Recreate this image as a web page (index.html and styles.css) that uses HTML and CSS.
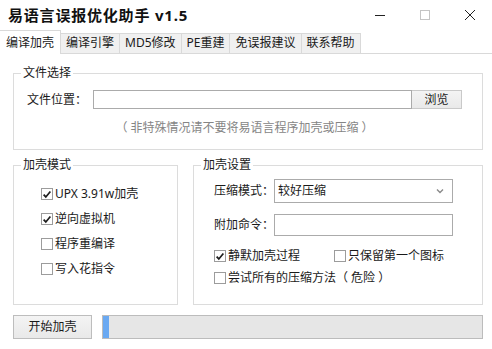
FILE: index.html
```html
<!DOCTYPE html>
<html lang="zh-CN">
<head>
  <meta charset="UTF-8">
  <title>易语言误报优化助手 v1.5</title>
  <link rel="stylesheet" href="styles.css">
</head>
<body>
  <div class="titlebar">
    <div class="app-title">易语言误报优化助手 v1.5</div>
    <div class="win-btns">
      <span class="win-btn"><svg width="10" height="10" viewBox="0 0 10 10"><path d="M0 5.5H10" stroke="#222" stroke-width="1"/></svg></span>
      <span class="win-btn"><svg width="10" height="10" viewBox="0 0 10 10"><rect x="0.5" y="0.5" width="9" height="9" fill="none" stroke="#c4c4c4"/></svg></span>
      <span class="win-btn"><svg width="10" height="10" viewBox="0 0 10 10"><path d="M0 0L10 10M10 0L0 10" stroke="#222" stroke-width="1"/></svg></span>
    </div>
  </div>

  <div class="tabs">
    <div class="tab active">编译加壳</div>
    <div class="tab">编译引擎</div>
    <div class="tab">MD5修改</div>
    <div class="tab">PE重建</div>
    <div class="tab">免误报建议</div>
    <div class="tab">联系帮助</div>
  </div>

  <div class="page">
    <fieldset class="group file-group">
      <legend>文件选择</legend>
      <div class="file-row">
        <span class="label">文件位置：</span>
        <div class="textbox file-path"></div>
        <button class="btn browse">浏览</button>
      </div>
      <div class="hint">（ 非特殊情况请不要将易语言程序加壳或压缩 ）</div>
    </fieldset>

    <div class="columns">
      <fieldset class="group mode-group">
        <legend>加壳模式</legend>
        <label class="check"><span class="cb on"><svg width="11" height="11" viewBox="0 0 11 11"><path d="M1.8 5.6L4.2 8.2L9.2 2.2" fill="none" stroke="#1e1e1e" stroke-width="1.9"/></svg></span>UPX 3.91w加壳</label>
        <label class="check"><span class="cb on"><svg width="11" height="11" viewBox="0 0 11 11"><path d="M1.8 5.6L4.2 8.2L9.2 2.2" fill="none" stroke="#1e1e1e" stroke-width="1.9"/></svg></span>逆向虚拟机</label>
        <label class="check"><span class="cb"></span>程序重编译</label>
        <label class="check"><span class="cb"></span>写入花指令</label>
      </fieldset>

      <fieldset class="group pack-group">
        <legend>加壳设置</legend>
        <div class="form-row">
          <span class="label">压缩模式：</span>
          <div class="combo">
            <span>较好压缩</span>
            <svg width="8" height="6" viewBox="0 0 8 6"><path d="M1 1.5L4 4.5L7 1.5" fill="none" stroke="#8a8a8a" stroke-width="1.4"/></svg>
          </div>
        </div>
        <div class="form-row second">
          <span class="label">附加命令：</span>
          <div class="textbox cmd"></div>
        </div>
        <div class="check-row">
          <label class="check"><span class="cb on"><svg width="11" height="11" viewBox="0 0 11 11"><path d="M1.8 5.6L4.2 8.2L9.2 2.2" fill="none" stroke="#1e1e1e" stroke-width="1.9"/></svg></span>静默加壳过程</label>
          <label class="check"><span class="cb"></span>只保留第一个图标</label>
        </div>
        <label class="check"><span class="cb"></span>尝试所有的压缩方法（ 危险 ）</label>
      </fieldset>
    </div>

    <div class="bottom">
      <button class="btn start">开始加壳</button>
      <div class="progress"><div class="progress-fill" style="width: 6px"></div></div>
    </div>
  </div>
</body>
</html>
```

FILE: styles.css
```css
* { box-sizing: border-box; }
body {
  margin: 0;
  background: #fff;
  color: #1a1a1a;
  font-family: "Noto Sans", "Noto Sans CJK SC", sans-serif;
  font-size: 12px;
  line-height: 14px;
}
.titlebar {
  height: 30px;
  display: flex;
  align-items: center;
  justify-content: space-between;
  padding-left: 8px;
}
.app-title {
  font-size: 15px;
  font-weight: bold;
  letter-spacing: 0.8px;
  color: #111;
}
.win-btns {
  display: flex;
  align-self: stretch;
}
.win-btn {
  width: 45px;
  display: flex;
  align-items: center;
  justify-content: center;
}
.tabs {
  display: flex;
  align-items: flex-end;
  height: 24px;
  border-bottom: 1px solid #d9d9d9;
}
.tab {
  height: 20px;
  line-height: 18px;
  padding: 0 5px;
  background: #f0f0f0;
  border: 1px solid #d9d9d9;
  border-bottom: none;
  margin-right: -1px;
  white-space: nowrap;
}
.tab.active {
  height: 24px;
  line-height: 24px;
  margin-bottom: -1px;
  padding: 0 6px;
  background: #fff;
  border-left: none;
  position: relative;
  z-index: 1;
}
.page {
  padding: 0 9px 0 13px;
}
.group {
  margin: 0;
  padding: 0;
  min-width: 0;
  border: 1px solid #dcdcdc;
}
.group legend {
  padding: 0 2px;
}
.file-group {
  margin-top: 12px;
  padding: 10px 20px 14px 13px;
}
.file-group legend {
  margin-left: -6px;
}
.file-row {
  display: flex;
  align-items: center;
  height: 19px;
}
.label {
  width: 60px;
  flex-shrink: 0;
  white-space: nowrap;
}
.textbox {
  height: 19px;
  border: 1px solid #ababab;
  background: #fff;
}
.file-path {
  flex: 1;
  margin-left: 6px;
}
.btn {
  font: inherit;
  color: #1a1a1a;
  background: linear-gradient(#f4f4f4, #e9e9e9);
  border: 1px solid #c9c9c9;
  padding: 0;
}
.browse {
  width: 50px;
  height: 19px;
  border-left: none;
}
.hint {
  margin-top: 12px;
  text-align: center;
  color: #858585;
}
.columns {
  display: flex;
  gap: 15px;
  margin-top: 8px;
}
.mode-group {
  width: 165px;
  height: 147px;
  padding: 12px 0 0 27px;
  display: flex;
  flex-direction: column;
  gap: 5px;
}
.mode-group legend {
  margin-left: -20px;
}
.pack-group {
  flex: 1;
  height: 147px;
  padding: 7px 29px 0 20px;
}
.pack-group legend {
  margin-left: -13px;
}
.check {
  display: flex;
  align-items: center;
  height: 20px;
  white-space: nowrap;
}
.cb {
  width: 12px;
  height: 12px;
  border: 1px solid #9c9c9c;
  background: #fff;
  margin-right: 2px;
  display: flex;
  align-items: center;
  justify-content: center;
  flex-shrink: 0;
}
.form-row {
  display: flex;
  align-items: center;
}
.form-row.second {
  margin-top: 11px;
}
.combo {
  flex: 1;
  height: 24px;
  border: 1px solid #ababab;
  display: flex;
  align-items: center;
  justify-content: space-between;
  padding: 0 8px 0 3px;
}
.cmd {
  flex: 1;
  height: 22px;
}
.check-row {
  display: flex;
  gap: 34px;
  margin-top: 10px;
}
.check-row + .check {
  margin-top: 2px;
}
.bottom {
  display: flex;
  gap: 10px;
  margin-top: 10px;
}
.start {
  width: 79px;
  height: 24px;
  border-color: #bdbdbd;
}
.progress {
  flex: 1;
  height: 24px;
  border: 1px solid #bcbcbc;
  background: #e6e6e6;
}
.progress-fill {
  height: 100%;
  background: #6aa9f2;
}
```
